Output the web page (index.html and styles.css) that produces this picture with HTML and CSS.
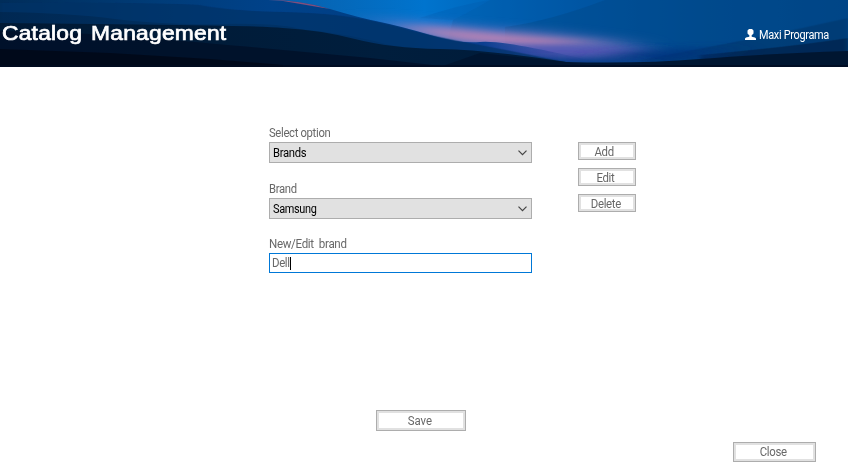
FILE: index.html
```html
<!DOCTYPE html>
<html lang="en">
<head>
<meta charset="utf-8">
<title>Catalog Management</title>
<link rel="stylesheet" href="styles.css">
</head>
<body>
<header class="banner">
  <svg class="scene" viewBox="0 0 848 67" preserveAspectRatio="none" aria-hidden="true">
    <defs>
      <linearGradient id="sky" x1="283" x2="848" y1="0" y2="0" gradientUnits="userSpaceOnUse">
        <stop offset="0" stop-color="#0860ac"/><stop offset=".25" stop-color="#0074ce"/><stop offset=".36" stop-color="#0068bd"/><stop offset=".52" stop-color="#0058a8"/><stop offset=".75" stop-color="#004a8e"/><stop offset="1" stop-color="#004080"/>
      </linearGradient>
      <linearGradient id="hill" x1="0" x2="620" y1="0" y2="0" gradientUnits="userSpaceOnUse">
        <stop offset="0" stop-color="#002d5a"/><stop offset=".25" stop-color="#003c78"/><stop offset=".44" stop-color="#00428a"/><stop offset=".65" stop-color="#003d82"/><stop offset=".78" stop-color="#0b3f90"/><stop offset=".92" stop-color="#203f98" stop-opacity=".2"/><stop offset="1" stop-color="#203f98" stop-opacity="0"/>
      </linearGradient>
      <linearGradient id="band" x1="0" x2="450" y1="0" y2="0" gradientUnits="userSpaceOnUse">
        <stop offset="0" stop-color="#002348"/><stop offset=".6" stop-color="#002f5f"/><stop offset="1" stop-color="#003066"/>
      </linearGradient>
      <linearGradient id="ground" x1="0" x2="848" y1="0" y2="0" gradientUnits="userSpaceOnUse">
        <stop offset="0" stop-color="#001934"/><stop offset=".45" stop-color="#001e3d"/><stop offset=".7" stop-color="#001a38"/><stop offset="1" stop-color="#00122c"/>
      </linearGradient>
      <filter id="soft" x="-40%" y="-100%" width="180%" height="300%"><feGaussianBlur stdDeviation="22 5"/></filter>
      <filter id="mist" x="-40%" y="-100%" width="180%" height="300%"><feGaussianBlur stdDeviation="20 3"/></filter>
      <filter id="edge" x="-5%" y="-10%" width="110%" height="120%"><feGaussianBlur stdDeviation="2 .7"/></filter>
    </defs>
    <rect width="848" height="67" fill="url(#sky)"/>
    <path d="M453 20Q476 8 490 0H848V67H440Z" fill="#00529f" opacity=".35"/>
    <path d="M420 18Q458 5 490 0L453 20Z" fill="#005aad" opacity=".3"/>
    <path d="M505 27Q550 21 605 0H848V67H505Z" fill="#004482" opacity=".35"/>
    <path d="M640 60Q750 40 848 18V67H640Z" fill="#003264" opacity=".45" filter="url(#edge)"/>
    <path d="M700 55Q790 47 848 38V67H700Z" fill="#001f43" opacity=".6" filter="url(#edge)"/>
    <path d="M360 16L410 21 480 27 550 32 630 42V62H530L430 37Z" fill="#8a7cc8" opacity=".62" filter="url(#soft)"/>
    <path d="M390 25L430 27 490 33 560 39 600 43 540 46 450 40Z" fill="#cf87b2" opacity=".8" filter="url(#mist)"/>
    <path d="M490 46L580 46 650 49 620 56 540 60Z" fill="#5354b4" opacity=".9" filter="url(#mist)"/>
    <path d="M620 52L730 46 700 60 600 63Z" fill="#00317d" opacity=".75" filter="url(#mist)"/>
    <path d="M0 0H268Q300 0 330 9T380 22 430 35 480 42 566 55L620 67H0Z" fill="url(#hill)"/>
    <path d="M480 60L560 57 630 59 640 67 480 67Z" fill="#063581" opacity=".75" filter="url(#mist)"/>
    <path d="M268 0Q300 0 330 9L318 7 283 1Z" fill="#a1527a" opacity=".8"/>
    <path d="M0 3Q60 2 125 3T200 5Q230 11 283 12Q345 13 390 25T480 45L566 62H0Z" fill="#003066" opacity=".7" filter="url(#edge)"/>
    <path d="M0 12Q70 13 115 19T220 24 300 29Q350 34 390 45L450 53H0Z" fill="url(#band)" opacity=".6"/>
    <path d="M0 23Q100 24 180 25T283 28Q320 30 355 39T440 49 566 62L600 67H0Z" fill="url(#ground)"/>
    <path d="M0 31Q80 32 160 39T283 50L370 58 450 67H0Z" fill="#001129" opacity=".85"/>
    <path d="M0 49L110 53 210 59 283 65V67H0Z" fill="#000817" opacity=".85"/>
    <path d="M480 53L566 62Q640 64 700 59T848 51V67H440Z" fill="#00152f" opacity=".95"/>
    <rect y="65" width="848" height="2" fill="#000b20" opacity=".75"/>
  </svg>
  <h1 class="title">Catalog Management</h1>
  <div class="user">
    <svg class="person" viewBox="0 0 11 11" aria-hidden="true"><path d="M4 0H7L8.5 1.5V4.5L7 6H6.7V7.8L10 8.5 11 9.6V11H0V9.6L1 8.5 4.3 7.8V6H4L2.5 4.5V1.5Z" fill="#fff"/></svg>
    <span class="username">Maxi Programa</span>
  </div>
</header>
<main class="content">
  <div class="editor">
    <div class="fields">
      <div class="field">
        <span class="label select">Select option</span>
        <div class="combo"><span class="brands">Brands</span><svg class="chevron" viewBox="0 0 9 6"><path d="M.5.7L4.5 4.7 8.5.7" fill="none" stroke="#444" stroke-width="1.2"/></svg></div>
      </div>
      <div class="field">
        <span class="label brand">Brand</span>
        <div class="combo"><span class="samsung">Samsung</span><svg class="chevron" viewBox="0 0 9 6"><path d="M.5.7L4.5 4.7 8.5.7" fill="none" stroke="#444" stroke-width="1.2"/></svg></div>
      </div>
      <div class="field last">
        <span class="label new">New/Edit&nbsp; brand</span>
        <div class="entry"><span>Dell</span><i class="caret"></i></div>
      </div>
    </div>
    <div class="actions">
      <div class="button add"><span>Add</span></div>
      <div class="button edit"><span>Edit</span></div>
      <div class="button delete"><span>Delete</span></div>
    </div>
  </div>
  <div class="button save"><span>Save</span></div>
  <div class="button close"><span>Close</span></div>
</main>
</body>
</html>
```
FILE: styles.css
```css
* { box-sizing: border-box; }
body { margin: 0; width: 848px; height: 472px; overflow: hidden; background: #fff; color: #686868; font: 12px/14px Roboto, "Liberation Sans", sans-serif; letter-spacing: -.35px; }
.banner { position: relative; height: 67px; display: flex; justify-content: space-between; align-items: flex-start; color: #fff; background: #001a35; }
.scene { position: absolute; inset: 0; width: 100%; height: 100%; }
.title { position: relative; margin: 21px 0 0 2px; font: 20px/24px "Liberation Sans", sans-serif; letter-spacing: .2px; word-spacing: 2px; white-space: nowrap; -webkit-text-stroke: .7px #fff; transform: scaleX(1.14); transform-origin: left; }
.user { position: relative; display: flex; margin: 28px 19px 0 0; gap: 3px; }
.person { width: 11px; height: 11px; margin-top: 1px; }
.username { width: 70px; white-space: nowrap; transform: scaleX(.91); transform-origin: left; }
.content { display: flex; flex-direction: column; height: 405px; }
.editor { display: flex; gap: 46px; margin: 59px 0 0 269px; height: 284px; }
.fields { width: 263px; }
.field { height: 56px; }
.field.last { margin-top: -1px; }
.label { display: block; height: 16px; white-space: nowrap; transform-origin: left; }
.select, .brand { transform: scaleX(.94); }
.new { transform: scaleX(.965); }
.combo { height: 21px; border: 1px solid #adadad; background: #e1e1e1; color: #000; display: flex; align-items: center; justify-content: space-between; padding: 0 4px 0 3px; }
.brands { transform: scaleX(.94); transform-origin: left; }
.samsung { transform: scaleX(.91); transform-origin: left; }
.chevron { width: 9px; height: 6px; }
.entry { height: 20px; border: 1px solid #0078d7; padding-left: 2px; display: flex; align-items: center; }
.entry span { width: 18px; transform: scaleX(.95); transform-origin: left; }
.caret { width: 1px; height: 13px; background: #000; }
.actions { display: flex; flex-direction: column; gap: 8px; padding-top: 16px; }
.button { display: flex; align-items: center; justify-content: center; width: 58px; height: 18px; border: 1px solid #adadad; box-shadow: inset 0 0 0 2px #e1e1e1; background: #fff; }
.actions .button { padding-top: 2px; }
.button span { transform: scaleX(.95); }
.add { padding-right: 6px; }
.edit { padding-right: 3px; }
.delete { padding-right: 2px; }
.save { width: 90px; height: 21px; margin-left: 376px; padding-right: 2px; letter-spacing: 0; }
.close { width: 83px; height: 20px; margin: 11px 0 0 733px; padding-right: 3px; }
```
